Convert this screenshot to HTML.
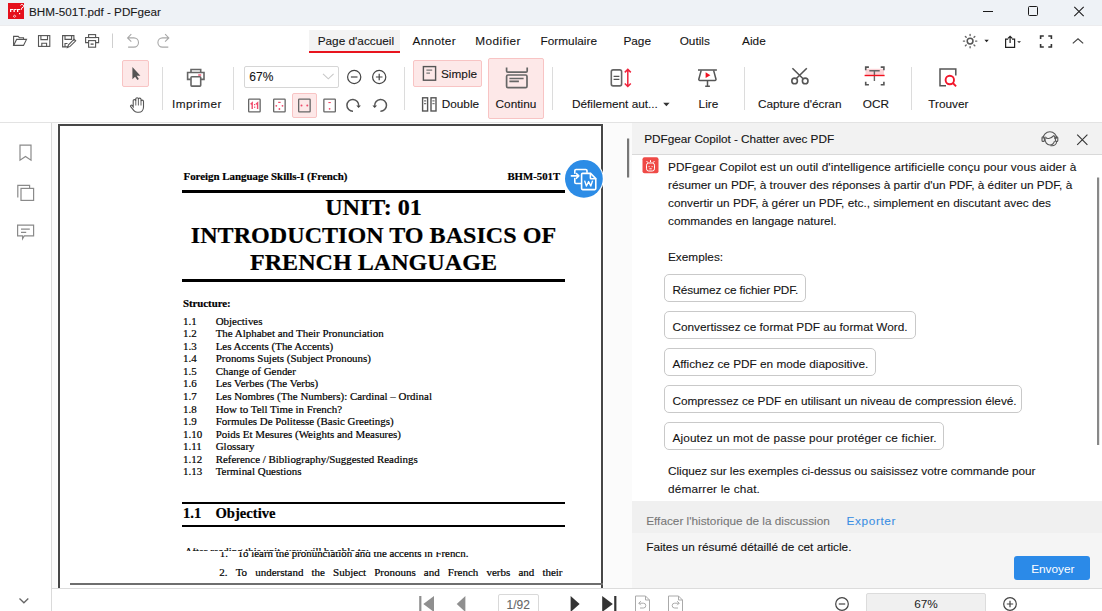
<!DOCTYPE html>
<html><head><meta charset="utf-8">
<style>
*{margin:0;padding:0;box-sizing:border-box}
html,body{width:1102px;height:611px;overflow:hidden;background:#fff;font-family:"Liberation Sans",sans-serif;font-size:11.8px;color:#141414;-webkit-text-stroke:0.1px currentColor}
.pdf{-webkit-text-stroke:0.2px currentColor}
.a{position:absolute}
.t{position:absolute;white-space:nowrap;line-height:1}
svg{position:absolute;overflow:visible}
#title{left:0;top:0;width:1102px;height:26px;background:#eef2f6;border-bottom:1px solid #ececee}
.sep{position:absolute;width:1px;background:#dcdcdc}
.pdf{font-family:"Liberation Serif",serif;color:#000}
</style></head><body>
<!-- TITLE BAR -->
<div id="title" class="a"></div>
<div class="a" style="left:8px;top:3px;width:16px;height:16px;background:#e0141e"></div>
<div class="t" style="left:29px;top:5.8px;font-size:11.7px;color:#1a1a1a">BHM-501T.pdf - PDFgear</div>

<!-- MENU ROW -->
<div class="a" style="left:309px;top:30px;width:91px;height:22px;background:#f3f3f3"></div>
<div class="a" style="left:309px;top:51px;width:91px;height:2px;background:#e8141e"></div>
<div class="t" style="left:317.7px;top:36.1px">Page d'accueil</div>
<div class="t" style="left:412.5px;top:36.1px;letter-spacing:0.3px">Annoter</div>
<div class="t" style="left:475.3px;top:36.1px;letter-spacing:0.45px">Modifier</div>
<div class="t" style="left:540.6px;top:36.1px">Formulaire</div>
<div class="t" style="left:623.4px;top:36.1px">Page</div>
<div class="t" style="left:679.7px;top:36.1px">Outils</div>
<div class="t" style="left:742.1px;top:36.1px">Aide</div>

<!-- TOOLBAR ROW 2 -->
<div class="a" style="left:122px;top:60px;width:27px;height:27px;background:#fde8e8;border:1px solid #f8c4c4;border-radius:2px"></div>
<div class="sep" style="left:162px;top:67px;height:43px"></div>
<div class="t" style="left:172px;top:99.2px;letter-spacing:0.4px">Imprimer</div>
<div class="sep" style="left:233px;top:67px;height:43px"></div>
<div class="a" style="left:244px;top:66px;width:95px;height:22px;border:1px solid #d6d6d6;border-radius:2px;background:#fff"></div>
<div class="t" style="left:249.3px;top:70.6px;font-size:12px">67%</div>
<div class="a" style="left:292px;top:93px;width:25px;height:25px;background:#fde8e8;border:1px solid #f8c4c4;border-radius:2px"></div>
<div class="sep" style="left:404px;top:67px;height:43px"></div>
<div class="a" style="left:413px;top:60px;width:69px;height:27px;background:#fde8e8;border:1px solid #f8c4c4;border-radius:2px"></div>
<div class="t" style="left:441px;top:69px">Simple</div>
<div class="t" style="left:441.7px;top:99.2px">Double</div>
<div class="a" style="left:488px;top:58px;width:56px;height:61px;background:#fde8e8;border:1px solid #f8c4c4;border-radius:2px"></div>
<div class="t" style="left:495.6px;top:99.2px">Continu</div>
<div class="sep" style="left:552px;top:67px;height:43px"></div>
<div class="t" style="left:572px;top:99.2px">Défilement aut...</div>
<div class="t" style="left:698.6px;top:99.2px">Lire</div>
<div class="sep" style="left:744px;top:67px;height:43px"></div>
<div class="t" style="left:757.9px;top:99.2px">Capture d'écran</div>
<div class="t" style="left:862.8px;top:99.2px">OCR</div>
<div class="sep" style="left:911px;top:67px;height:43px"></div>
<div class="t" style="left:928.3px;top:99.2px">Trouver</div>
<div class="a" style="left:0;top:122px;width:1102px;height:1px;background:#e3e3e3"></div>

<!-- LEFT SIDEBAR -->
<div class="a" style="left:51px;top:123px;width:1px;height:488px;background:#dadada"></div>

<!-- PDF AREA -->
<div class="a" style="left:52px;top:123px;width:580px;height:465px;background:#fbfbfb"></div>
<div class="a" style="left:58px;top:124px;width:545px;height:470px;background:#fff;border:2px solid #474747;border-bottom:none;box-shadow:0 0 0 1px #fff"></div>

<!-- PDF CONTENT -->
<div class="t pdf" style="left:183.5px;top:171.1px;font-size:10.9px;font-weight:bold">Foreign Language Skills-I (French)</div>
<div class="t pdf" style="left:507.4px;top:171.1px;font-size:10.8px;font-weight:bold">BHM-501T</div>
<div class="a" style="left:182px;top:190px;width:383px;height:3px;background:#000"></div>
<div class="t pdf" style="left:182px;width:383px;text-align:center;top:195.3px;font-size:24.1px;font-weight:bold">UNIT: 01</div>
<div class="t pdf" style="left:182px;width:383px;text-align:center;top:223.2px;font-size:24.1px;font-weight:bold">INTRODUCTION TO BASICS OF</div>
<div class="t pdf" style="left:182px;width:383px;text-align:center;top:250.2px;font-size:24.1px;font-weight:bold">FRENCH LANGUAGE</div>
<div class="a" style="left:182px;top:279px;width:383px;height:3px;background:#000"></div>
<div class="t pdf" style="left:182.9px;top:298px;font-size:10.8px;font-weight:bold">Structure:</div>
<div class="t pdf" style="left:183px;top:315.6px;font-size:10.95px">1.1</div><div class="t pdf" style="left:215.7px;top:315.6px;font-size:10.95px">Objectives</div>
<div class="t pdf" style="left:183px;top:328.2px;font-size:10.95px">1.2</div><div class="t pdf" style="left:215.7px;top:328.2px;font-size:10.95px">The Alphabet and Their Pronunciation</div>
<div class="t pdf" style="left:183px;top:340.7px;font-size:10.95px">1.3</div><div class="t pdf" style="left:215.7px;top:340.7px;font-size:10.95px">Les Accents (The Accents)</div>
<div class="t pdf" style="left:183px;top:353.3px;font-size:10.95px">1.4</div><div class="t pdf" style="left:215.7px;top:353.3px;font-size:10.95px">Pronoms Sujets (Subject Pronouns)</div>
<div class="t pdf" style="left:183px;top:365.8px;font-size:10.95px">1.5</div><div class="t pdf" style="left:215.7px;top:365.8px;font-size:10.95px">Change of Gender</div>
<div class="t pdf" style="left:183px;top:378.4px;font-size:10.95px">1.6</div><div class="t pdf" style="left:215.7px;top:378.4px;font-size:10.95px">Les Verbes (The Verbs)</div>
<div class="t pdf" style="left:183px;top:390.9px;font-size:10.95px">1.7</div><div class="t pdf" style="left:215.7px;top:390.9px;font-size:10.95px">Les Nombres (The Numbers): Cardinal – Ordinal</div>
<div class="t pdf" style="left:183px;top:403.5px;font-size:10.95px">1.8</div><div class="t pdf" style="left:215.7px;top:403.5px;font-size:10.95px">How to Tell Time in French?</div>
<div class="t pdf" style="left:183px;top:416.0px;font-size:10.95px">1.9</div><div class="t pdf" style="left:215.7px;top:416.0px;font-size:10.95px">Formules De Politesse (Basic Greetings)</div>
<div class="t pdf" style="left:183px;top:428.6px;font-size:10.95px">1.10</div><div class="t pdf" style="left:215.7px;top:428.6px;font-size:10.95px">Poids Et Mesures (Weights and Measures)</div>
<div class="t pdf" style="left:183px;top:441.1px;font-size:10.95px">1.11</div><div class="t pdf" style="left:215.7px;top:441.1px;font-size:10.95px">Glossary</div>
<div class="t pdf" style="left:183px;top:453.7px;font-size:10.95px">1.12</div><div class="t pdf" style="left:215.7px;top:453.7px;font-size:10.95px">Reference / Bibliography/Suggested Readings</div>
<div class="t pdf" style="left:183px;top:466.2px;font-size:10.95px">1.13</div><div class="t pdf" style="left:215.7px;top:466.2px;font-size:10.95px">Terminal Questions</div>
<div class="a" style="left:182px;top:502px;width:383px;height:2px;background:#000"></div>
<div class="t pdf" style="left:183px;top:506.2px;font-size:14.6px;font-weight:bold">1.1</div>
<div class="t pdf" style="left:215.5px;top:506.2px;font-size:14.6px;font-weight:bold">Objective</div>
<div class="a" style="left:182px;top:525px;width:383px;height:2px;background:#000"></div>
<div class="a" style="left:180px;top:547.5px;width:300px;height:3.5px;overflow:hidden"><div class="t pdf" style="left:4.7px;top:-2.6px;font-size:10.8px;top:-1.9px">After reading this unit, you will be able to:</div></div>
<div class="a" style="left:180px;top:551.5px;width:300px;height:12px;overflow:hidden"><div class="t pdf" style="left:39.8px;top:-3.7px;font-size:10.9px">1.</div><div class="t pdf" style="left:57.2px;top:-3.7px;font-size:10.9px">To learn the pronunciation and the accents in French.</div></div>
<div class="a pdf" style="left:219.3px;top:566.8px;width:343.4px;font-size:11px;line-height:1;text-align:justify;text-align-last:justify;white-space:nowrap;display:flex;justify-content:space-between"><span>2.</span><span>To</span><span>understand</span><span>the</span><span>Subject</span><span>Pronouns</span><span>and</span><span>French</span><span>verbs</span><span>and</span><span>their</span></div>
<div class="a" style="left:70px;top:583px;width:533px;height:2px;background:#6e6e6e"></div>

<!-- CHAT PANEL -->
<div class="a" style="left:632px;top:123px;width:470px;height:32px;background:#f2f2f2;border-bottom:1px solid #d9d9d9"></div>
<div class="t" style="left:644.3px;top:134px;letter-spacing:-0.05px">PDFgear Copilot - Chatter avec PDF</div>
<div class="a" style="left:632px;top:501px;width:470px;height:32px;background:#f0f0f0"></div>
<div class="a" style="left:632px;top:533px;width:470px;height:55px;background:#f5f5f5"></div>

<!-- CHAT CONTENT -->
<div class="t" style="left:668px;top:162.0px;letter-spacing:0.1px">PDFgear Copilot est un outil d'intelligence artificielle conçu pour vous aider à</div>
<div class="t" style="left:668px;top:179.9px">résumer un PDF, à trouver des réponses à partir d'un PDF, à éditer un PDF, à</div>
<div class="t" style="left:668px;top:197.7px">convertir un PDF, à gérer un PDF, etc., simplement en discutant avec des</div>
<div class="t" style="left:668px;top:215.6px">commandes en langage naturel.</div>
<div class="t" style="left:668px;top:251.5px">Exemples:</div>
<div class="a" style="left:664px;top:274.1px;width:142.0px;height:28.3px;border:1px solid #c9c9c9;border-radius:5px;background:#fff"></div>
<div class="t" style="left:672.4px;top:285.2px;letter-spacing:-0.15px">Résumez ce fichier PDF.</div>
<div class="a" style="left:664px;top:311.1px;width:251.5px;height:28.3px;border:1px solid #c9c9c9;border-radius:5px;background:#fff"></div>
<div class="t" style="left:672.4px;top:322.2px">Convertissez ce format PDF au format Word.</div>
<div class="a" style="left:664px;top:348.1px;width:212.0px;height:28.3px;border:1px solid #c9c9c9;border-radius:5px;background:#fff"></div>
<div class="t" style="left:672.4px;top:359.2px">Affichez ce PDF en mode diapositive.</div>
<div class="a" style="left:664px;top:385.1px;width:357.7px;height:28.3px;border:1px solid #c9c9c9;border-radius:5px;background:#fff"></div>
<div class="t" style="left:672.4px;top:396.2px">Compressez ce PDF en utilisant un niveau de compression élevé.</div>
<div class="a" style="left:664px;top:422.1px;width:279.8px;height:28.3px;border:1px solid #c9c9c9;border-radius:5px;background:#fff"></div>
<div class="t" style="left:672.4px;top:433.2px;letter-spacing:0.15px">Ajoutez un mot de passe pour protéger ce fichier.</div>
<div class="t" style="left:668px;top:466.1px;letter-spacing:-0.035px">Cliquez sur les exemples ci-dessus ou saisissez votre commande pour</div>
<div class="t" style="left:668px;top:484.1px;letter-spacing:0.17px">démarrer le chat.</div>
<div class="t" style="left:646.2px;top:516.1px;color:#777">Effacer l'historique de la discussion</div>
<div class="t" style="left:846.6px;top:516.1px;color:#3c8fe3;letter-spacing:0.6px">Exporter</div>
<div class="t" style="left:646.2px;top:542.1px;color:#111">Faites un résumé détaillé de cet article.</div>
<div class="a" style="left:1013.8px;top:556.2px;width:76.2px;height:23.5px;background:#2b8ae8;border-radius:3px"></div>
<div class="t" style="left:1031.2px;top:563.6px;color:#fff;-webkit-text-stroke:0">Envoyer</div>

<!-- BOTTOM BAR -->
<div class="a" style="left:52px;top:588px;width:1050px;height:23px;background:#fff;border-top:1px solid #dcdcdc"></div>
<div class="a" style="left:497.5px;top:593.5px;width:41.5px;height:22px;border:1px solid #d9d9d9;border-radius:2px;background:#fff"></div>
<div class="t" style="left:497.5px;width:41.5px;text-align:center;top:598.5px;color:#666;font-size:12px">1/92</div>
<div class="a" style="left:866px;top:593px;width:120px;height:22px;border:1px solid #dcdcdc;border-radius:2px;background:#f0f0f0"></div>
<div class="t" style="left:866px;width:120px;text-align:center;top:598.5px;color:#222;font-size:11.8px;-webkit-text-stroke:0">67%</div>
<!-- ICONS -->
<svg width="1102" height="611" viewBox="0 0 1102 611" style="left:0;top:0" fill="none" stroke-linecap="butt" stroke-linejoin="miter">
<!-- logo -->
<rect x="8" y="3" width="16" height="16" fill="#e5101c"/>
<g fill="#fff">
<rect x="10" y="9" width="1.3" height="3"/><rect x="11" y="9" width="2" height="1"/>
<rect x="13.5" y="9" width="1.3" height="3"/><rect x="14.5" y="9" width="2" height="1"/>
<rect x="17" y="9" width="1.3" height="3"/><rect x="18" y="9" width="2" height="1"/>
<path d="M20.5 5.5 a1.6 1.6 0 1 1 1.5 2.2 l-1 2.3" stroke="#fff" stroke-width="1" fill="none"/>
<rect x="19" y="13" width="1.2" height="1.2"/>
<path d="M14.5 15 l1.2 1.2 l-1.2 1.2 l-1.2 -1.2z" fill="none" stroke="#fff" stroke-width="0.8"/>
</g>
<!-- window controls -->
<path d="M983 11.5h10" stroke="#1a1a1a" stroke-width="1"/>
<rect x="1028.5" y="6.5" width="9" height="9" rx="1" stroke="#1a1a1a" stroke-width="1"/>
<path d="M1074.3 6.8l9.4 9.4M1083.7 6.8l-9.4 9.4" stroke="#1a1a1a" stroke-width="1.05"/>
<!-- quick access -->
<g stroke="#555" stroke-width="1.1">
<path d="M13.6 45.4V36.4h4.5l1.3 1.3h4.1v1.8"/>
<path d="M13.6 45.4l3-6h9.9l-3 6z"/>
<rect x="38.5" y="35.6" width="11.3" height="10.8"/>
<path d="M40.9 35.6v4h6.6v-4M41.8 46.4v-3.2h4.8v3.2"/>
<path d="M68 46.9H62.6V35.6h11.3V41"/>
<path d="M65 35.6v3.8h6.6v-3.8M65 46.9v-3.4h2.5"/>
<path d="M67.5 47.5l1-2.7 5.6-5.6 1.6 1.6-5.6 5.6z"/>
<rect x="88.6" y="34.6" width="7" height="3"/>
<path d="M88.6 42.6h-3v-5.1h13v5.1h-3"/>
<rect x="88.6" y="40.6" width="7" height="6.6"/>
</g>
<rect x="90.6" y="43.3" width="3" height="1.7" fill="#777"/>
<path d="M112.5 33.5v14.5" stroke="#cfcfcf" stroke-width="1"/>
<g stroke="#a8a8a8" stroke-width="1.1">
<path d="M127.6 37.9h6.3a4.6 4.6 0 0 1 0 9.2h-5.8M131.3 34.2l-3.7 3.7 3.7 3.7"/>
<path d="M168.8 37.9h-6.3a4.6 4.6 0 0 0 0 9.2h5.8M165.1 34.2l3.7 3.7-3.7 3.7"/>
</g>
<!-- right menu icons -->
<g stroke="#555" stroke-width="1.5">
<circle cx="970.1" cy="41.1" r="2.9"/>
</g>
<g stroke="#666" stroke-width="1.4" stroke-linecap="round"><path d="M970.1 34.4v1.2M970.1 46.6v1.2M963.4 41.1h1.2M975.6 41.1h1.2M965.4 36.4l.8.8M974 45l.8.8M974.8 36.4l-.8.8M966.2 45l-.8.8"/></g>
<path d="M984.4 39.8h4.4l-2.2 2.4z" fill="#222"/>
<g stroke="#222" stroke-width="1.2">
<path d="M1008.2 39.2h-2.6v8.2h9v-8.2h-2.6"/>
<path d="M1010.1 43v-6.6M1008 38.4l2.1-2.1 2.1 2.1"/>
</g>
<path d="M1017.2 41.2h3.8l-1.9 1.8z" fill="#222"/>
<g stroke="#333" stroke-width="1.6">
<path d="M1040.6 39v-3h3.2M1048.3 36h3.1v3M1051.4 44v3h-3.1M1043.8 47h-3.2v-3"/>
</g>
<path d="M1072.8 43.4l5.2-4.6 5.2 4.6" stroke="#444" stroke-width="1.2"/>

<!-- select / hand -->
<path d="M132.4 67v12.3l2.7-2.6 2.3 3.4 1.5-1-2.2-3.4h3.7z" fill="#555"/>
<path d="M133.2 106.8V100.9a1.3 1.3 0 0 1 2.6 0V99a1.3 1.3 0 0 1 2.6 0V99.4a1.3 1.3 0 0 1 2.6 0V101.4a1.25 1.25 0 0 1 2.5 0V107c0 3-2 5.3-4.8 5.3h-1.6c-1.4 0-2.4-.6-3.2-1.6l-3.2-4c-.7-.9.6-2.1 1.5-1.3z" stroke="#555" stroke-width="1.1"/><path d="M135.8 100.9v4.6M138.4 99.2v6.3M141 101.4v4.1" stroke="#555" stroke-width="0.9"/>

<!-- printer big -->
<g stroke="#666" stroke-width="1.6">
<path d="M191 72.3v-2.8h9.7v2.8"/>
<path d="M190.8 79.4h-3.2v-6.9h16.4v6.9h-3.2"/>
<rect x="191" y="76.8" width="9.7" height="9.3" rx="0.8"/>
</g>
<path d="M198.2 75h3" stroke="#f0506e" stroke-width="1.4"/>

<!-- zoom box chevron, minus, plus -->
<path d="M323 73.8l5.3 5 5.3-5" stroke="#c8c8c8" stroke-width="1.1"/>
<g stroke="#444" stroke-width="1.2">
<circle cx="354.2" cy="77" r="6.6"/><path d="M350.9 77h6.6"/>
<circle cx="379.2" cy="77" r="6.6"/><path d="M375.9 77h6.6M379.2 73.7v6.6"/>
</g>
<!-- fit icons -->
<g stroke="#666" stroke-width="1.3">
<rect x="248.65" y="99.05" width="11.5" height="12.8" rx="0.6"/>
<rect x="273.65" y="99.05" width="11.5" height="12.8" rx="0.6"/>
<rect x="298.65" y="99.05" width="11.5" height="12.8" rx="0.6"/>
<rect x="323.85" y="99.05" width="11.5" height="12.8" rx="0.6"/>
</g>
<g fill="#f04a6a">
<path d="M250.6 104.2l1.6-1.4v6.1M256 104.2l1.6-1.4v6.1" stroke="#f04a6a" stroke-width="1.4" fill="none"/><rect x="254" y="104" width="1.3" height="1.2"/><rect x="254" y="106.6" width="1.3" height="1.2"/>
<rect x="278.2" y="101.8" width="2.4" height="1.2"/><circle cx="276.3" cy="105.8" r="0.9"/><circle cx="282.5" cy="105.8" r="0.9"/><circle cx="279.4" cy="109" r="0.9"/>
<circle cx="301.5" cy="105.6" r="1"/><circle cx="307.3" cy="105.6" r="1"/>
<rect x="328.4" y="102" width="2.4" height="1.1"/><circle cx="329.6" cy="108.8" r="0.9"/>
</g>
<g stroke="#555" stroke-width="1.5">
<path d="M353 111.2a5.9 5.9 0 1 1 5.7-5.4"/>
<path d="M380.4 111.2a5.9 5.9 0 1 0 -5.7-5.4"/>
</g>
<path d="M356.3 105.6h4.6l-2.3 2.4z" fill="#444"/>
<path d="M372.4 105.6h4.6l-2.3 2.4z" fill="#444"/>

<!-- simple / double / continu -->
<g stroke="#555" stroke-width="1.4">
<rect x="423.4" y="66.6" width="12.2" height="13.6"/>
<rect x="422.6" y="97.8" width="5" height="13.2"/>
<rect x="431" y="97.8" width="5" height="13.2"/>
</g>
<g stroke="#777" stroke-width="1.2">
<path d="M426.4 70.2h5.8M426.4 73.1h3.6"/>
<path d="M424 100.8h2.2M424 103.6h2.2M432.4 100.8h2.2M432.4 103.6h2.2"/>
</g>
<g stroke="#666" stroke-width="1.7">
<path d="M506.6 67.4v3.6a1.2 1.2 0 0 0 1.2 1.2h18.2a1.2 1.2 0 0 0 1.2-1.2v-3.6"/>
<rect x="506.6" y="75" width="20.4" height="12.6" rx="1.4"/>
<path d="M509.4 78.5h14.2M509.4 81.4h9.5"/>
</g>
<!-- defilement -->
<rect x="611.3" y="69.9" width="10.3" height="16" rx="1.8" stroke="#666" stroke-width="1.6"/>
<path d="M613.6 76.4h5.8M613.6 79.3h5.8" stroke="#555" stroke-width="1.3"/>
<g stroke="#f0243c" stroke-width="1.5">
<path d="M627.8 69.6v16.8M624.8 72.4l3-3 3 3M624.8 83.5l3 3 3-3"/>
</g>
<path d="M663.2 102.8h6.4l-3.2 3.4z" fill="#333"/>
<!-- lire -->
<g stroke="#555" stroke-width="1.5">
<path d="M698 70h18.9"/>
<path d="M701.2 70.4l-2.4 8.8a1 1 0 0 0 1 1.2h15.2a1 1 0 0 0 1-1.2l-2.4-8.8"/>
<path d="M707.5 80.4v5.8M705.2 86.3h4.7"/>
</g>
<path d="M705.6 72.3v5.7l4.8-2.85z" fill="#f01020"/>
<!-- scissors -->
<g stroke="#555" stroke-width="1.6">
<path d="M792.4 68.3l10.7 10.4M806.8 68.3l-10.7 10.4"/>
<circle cx="794.6" cy="80.9" r="2.8"/><circle cx="805.2" cy="80.9" r="2.8"/>
</g>
<!-- ocr -->
<rect x="865.5" y="68.8" width="18.5" height="6.5" fill="#fbd4d8"/>
<g stroke="#555" stroke-width="1.6">
<path d="M865.7 70.2v-3.1h3.2M880.7 67.1h3.2v3.1M883.9 81.7v3.1h-3.2M868.9 84.8h-3.2v-3.1"/>
</g>
<path d="M869.3 70.7h10.4M874.4 70.7v10.3" stroke="#666" stroke-width="1.4"/>
<path d="M864.6 75.5h20" stroke="#f2101e" stroke-width="1.4"/>
<!-- trouver -->
<path d="M955.8 75.6v-6.6h-15.8v16.7h6" stroke="#555" stroke-width="1.5"/>
<circle cx="949.8" cy="80" r="4.2" stroke="#f2182c" stroke-width="1.9"/>
<path d="M952.8 83l3.3 3.3" stroke="#f2182c" stroke-width="1.9"/>

<!-- sidebar -->
<g stroke="#8a8a8a" stroke-width="1.2">
<path d="M20 145.2h11v15l-5.5-3.8-5.5 3.8z"/>
<path d="M17.8 197.5v-12.2h11.8v2.6"/>
<rect x="21" y="188.4" width="12.6" height="12"/>
<path d="M17.6 225.2h16v10.6h-9.2l-1.8 2.8v-2.8h-5z"/>
<path d="M21 229.2h8.8M21 232.3h5.2"/>
</g>
<path d="M19.5 598.5l4.4 4.3 4.4-4.3" stroke="#666" stroke-width="1.3"/>

<!-- scrollbars -->
<rect x="627" y="138.5" width="2.2" height="39" fill="#777"/>
<rect x="1097" y="177.5" width="2.2" height="267.5" fill="#888"/>

<!-- word circle -->
<circle cx="583.9" cy="178.8" r="20" fill="#fff"/>
<circle cx="583.9" cy="178.8" r="18.9" fill="#2c8ce6"/>
<g stroke="#fff" stroke-width="1.6" stroke-linejoin="round" stroke-linecap="round">
<path d="M587 172.2v-1.4a1.3 1.3 0 0 0-1.3-1.3h-9.6a1.3 1.3 0 0 0-1.3 1.3v2.4M574.8 178.6v3.6a1.3 1.3 0 0 0 1.3 1.3h4.6"/>
<path d="M571.4 175.9h7.4M576.4 173.5l2.4 2.4-2.4 2.4"/>
<path d="M582.6 173.4h8l5.2 5.2v10a1 1 0 0 1-1 1h-12.2a1 1 0 0 1-1-1v-14.2a1 1 0 0 1 1-1z"/>
<path d="M590.4 173.6v4.4a.8.8 0 0 0 .8.8h4.4"/>
</g>
<path d="M584.6 180.6l1.8 5.4 2.2-4.4 2.2 4.4 1.8-5.4" stroke="#fff" stroke-width="1.4" stroke-linejoin="round"/>

<!-- chat header icons -->
<g stroke="#555" stroke-width="1.1" transform="translate(0,-0.8)">
<path d="M1043 139.5a6.9 6.9 0 0 1 13.8 0"/>
<path d="M1045.4 137.5c1.5 3 5 2.2 8.6-1.2"/>
<path d="M1045 138.8c-.2 4.2 2 7 4.9 7 2.3 0 4-1.6 4.6-3.8"/>
<path d="M1054.4 136.4c.4 1 .5 2.2.3 3.2"/>
<rect x="1042" y="137.6" width="2.4" height="4.6" rx="1"/>
<rect x="1055.4" y="137.6" width="2.4" height="4.6" rx="1"/>
<path d="M1056.6 142.2c0 2.6-2.2 4.3-4.6 4.3h-1.6"/>
</g>
<path d="M1077.2 134.6l10.2 10.2M1087.4 134.6l-10.2 10.2" stroke="#333" stroke-width="1.1"/>
<!-- robot -->
<rect x="642.5" y="157.3" width="16" height="16" rx="2" fill="#ef4a46"/>
<g stroke="#fff" stroke-width="1">
<rect x="646.5" y="163" width="8" height="8" rx="2.2"/>
<path d="M646.5 161l1.6 1.8M654.5 161l-1.6 1.8M650.5 160.2v1.8"/>
<path d="M648.6 166.6h1M651.6 166.6h1M649.3 168.8h2.4"/>
</g>

<!-- bottom bar -->
<rect x="419.2" y="596" width="2.2" height="16" fill="#8f8f8f"/>
<path d="M434 596v16l-10.7-8z" fill="#8f8f8f"/>
<path d="M465.4 596v16l-8.7-8z" fill="#8f8f8f"/>
<path d="M570.6 596v16l9 -8z" fill="#333"/>
<path d="M602.2 596v16l10.6-8z" fill="#333"/>
<rect x="614.2" y="596" width="2.2" height="16" fill="#333"/>
<g stroke="#aaa" stroke-width="1">
<path d="M635.5 612v-16h10l4 4v12"/><path d="M645.5 596v4h4"/>
<path d="M668.5 612v-16h10l4 4v12"/><path d="M678.5 596v4h4"/>
<path d="M638.8 603.2h4.6a2.4 2.4 0 0 1 0 4.8h-3.4M640.8 601.2l-2 2 2 2"/>
<path d="M679.2 603.2h-4.6a2.4 2.4 0 0 0 0 4.8h3.4M677.2 601.2l2 2-2 2"/>
</g>
<g stroke="#444" stroke-width="1.2">
<circle cx="842" cy="604" r="6.3"/><path d="M838.8 604h6.4"/>
<circle cx="1010" cy="604" r="6.3"/><path d="M1006.8 604h6.4M1010 600.8v6.4"/>
</g>
</svg>
<!-- /ICONS -->
</body></html>
